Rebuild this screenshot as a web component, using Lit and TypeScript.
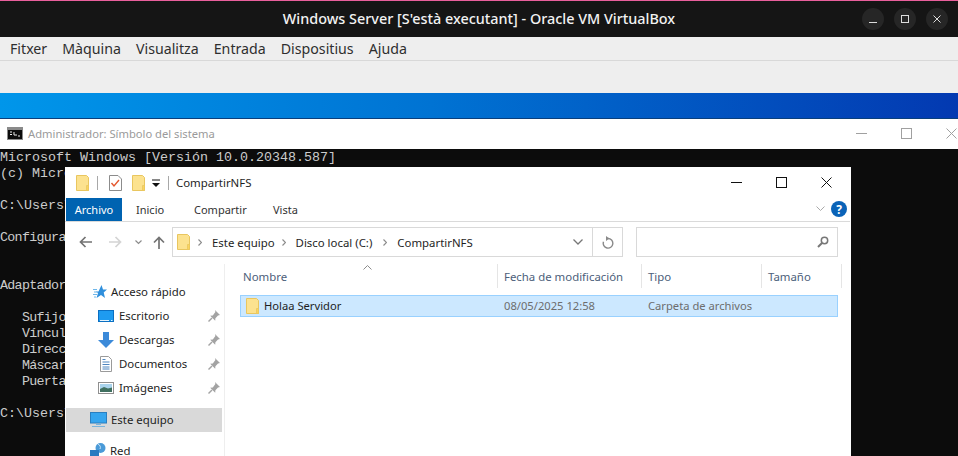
import { LitElement, html, css } from "lit";
import { customElement } from "lit/decorators.js";

const folder = () => html`<svg width="13" height="16" viewBox="0 0 13 16"><path d="M.5.5h10l2 2v13H.5z" fill="#fce28f" stroke="#e9c65f"/><path d="M10.5 10.5h2v5h-2z" fill="#fbd45e" stroke="#e9c65f" stroke-width=".8"/></svg>`;
const chev = html`<svg width="4" height="7" viewBox="0 0 4 7"><path d="M.5.5l3 3-3 3" fill="none" stroke="#8c8c8c" stroke-width="1.2"/></svg>`;
const pin = html`<svg width="14" height="14" viewBox="0 0 14 14"><path d="M8 1l5 5-2 .6-2.6 2.6-.2 2.6-5-5 2.6-.3L8.4 3z" fill="#a3a3a3"/><path d="M5 9l-3.5 3.5" stroke="#a3a3a3" stroke-width="1.5"/></svg>`;

const menu = ["Fitxer", "Màquina", "Visualitza", "Entrada", "Dispositius", "Ajuda"];
const consoleLines: [string, boolean][] = [
  ["Microsoft Windows [Versión 10.0.20348.587]", false],
  ["(c) Micro", false],
  ["", false],
  ["C:\\Users\\", false],
  ["", false],
  ["Configura", true],
  ["", false],
  ["", false],
  ["Adaptador", true],
  ["", false],
  ["   Sufijo", true],
  ["   Víncul", true],
  ["   Direcc", true],
  ["   Máscar", true],
  ["   Puerta", true],
  ["", false],
  ["C:\\Users\\", false],
];
const navIcons: Record<string, unknown> = {
  desk: html`<svg width="16" height="12" viewBox="0 0 16 12"><rect x=".5" y=".5" width="15" height="11" fill="#1e9bf0" stroke="#0b6fc2"/><path d="M2 10.5h9M13 10.5h1.5" stroke="#e6f4fd"/></svg>`,
  down: html`<svg width="16" height="16" viewBox="0 0 16 16"><path d="M5 0h6v8h5l-8 8-8-8h5z" fill="#3c8ad9"/></svg>`,
  doc: html`<svg width="12" height="16" viewBox="0 0 12 16"><path d="M.5.5h8l3 3v12H.5z" fill="#fff" stroke="#9a9a9a"/><path d="M2.5 3.5h3M2.5 6h7M2.5 8.5h7M2.5 11h7M2.5 13h7" stroke="#4f86bf"/></svg>`,
  img: html`<svg width="16" height="12" viewBox="0 0 16 12"><rect x=".5" y=".5" width="15" height="11" fill="#fff" stroke="#8f8f8f"/><rect x="2" y="2" width="12" height="8" fill="#a9d3ec"/><path d="M2 7l4-2 4 1.5 4-1V10H2z" fill="#3f6f5f"/></svg>`,
};

@customElement("app-root")
export class AppRoot extends LitElement {
  static styles = css`
    :host { display: block; width: 958px; height: 456px; overflow: hidden; position: relative; background: #0c0c0c; }
    * { box-sizing: border-box; }
    .page { display: flex; flex-direction: column; height: 456px; }
    .titlebar { height: 37px; flex: none; background: #151515; border-top: 1px solid #e95f9c; color: #f2f2f2; display: flex; align-items: center; justify-content: center; position: relative; font: 500 14.4px "Noto Sans", sans-serif; padding-bottom: 1px; }
    .wm { position: absolute; right: 10px; top: 7px; display: flex; gap: 10px; }
    .wm span { width: 22px; height: 22px; border-radius: 50%; background: #262626; display: flex; align-items: center; justify-content: center; }
    .menubar { height: 24px; flex: none; background: #eeeeee; border-bottom: 1px solid #d8d8d8; display: flex; gap: 15px; padding: 0 0 1px 10px; align-items: center; font: 14.2px "Noto Sans", sans-serif; color: #2e2e2e; }
    .toolbar { height: 32px; flex: none; background: #eeeeee; }
    .desktop { height: 26px; flex: none; background: linear-gradient(90deg, #0096ea 0%, #0073d3 45%, #0339b1 100%); border-bottom: 1px solid #0a3f7c; }
    .cmd-title { height: 30px; flex: none; background: #fff; display: flex; align-items: center; padding: 0 0 2px 7px; gap: 5px; font: 11.2px "Noto Sans", sans-serif; color: #9a9a9a; overflow: hidden; }
    .cmd-btns { margin-left: auto; margin-right: -16px; display: flex; align-items: center; flex: none; }
    .cmd-btns span { width: 45px; display: flex; justify-content: center; }
    .cmd-body { flex: 1; background: #0c0c0c; color: #cccccc; font: 13.33px/16px "Liberation Mono", monospace; white-space: pre; padding-top: 1px; overflow: hidden; }
    .cmd-body div { height: 16px; }
    .cmd-body .narrow { letter-spacing: -0.7px; }
    .explorer { position: absolute; left: 65px; top: 167px; width: 786px; height: 289px; background: #fff; display: flex; flex-direction: column; font: 11.4px "Noto Sans", sans-serif; color: #1e1e1e; overflow: hidden; }
    .ex-title { height: 31px; flex: none; display: flex; align-items: center; padding: 0 0 0 11px; }
    .ex-title .sep { width: 1px; height: 14px; background: #a8a8a8; margin: 0 11px 0 8px; }
    .ex-title .sep.last { margin: 0 0 0 8px; }
    .ex-title .gap { width: 10px; }
    .ex-title .drop { margin-left: 7px; }
    .ex-title .name { margin-left: 7px; }
    .ex-btns { margin-left: auto; margin-right: 2px; display: flex; align-items: center; }
    .ex-btns span { width: 45px; display: flex; justify-content: center; }
    .tabs { height: 24px; flex: none; margin-right: 1px; border-bottom: 1px solid #dadada; display: flex; align-items: stretch; padding-left: 1px; }
    .tab { display: flex; align-items: center; font-size: 11px; color: #333; }
    .tab.on { background: #0063b1; color: #fff; width: 56px; justify-content: center; }
    .tab.in { padding-left: 14px; width: 58px; }
    .tab.co { width: 79px; padding-left: 14px; }
    .tab.vi { padding-left: 14px; }
    .ribbon-end { margin-left: auto; display: flex; align-items: center; gap: 6px; padding: 0 3px 1px 0; }
    .help { width: 16px; height: 16px; border-radius: 50%; background: #0a63b8; color: #fff; display: flex; align-items: center; justify-content: center; font: 700 12px "Noto Sans", sans-serif; }
    .nav { height: 42px; flex: none; display: flex; align-items: flex-start; padding: 5px 13px 0 14px; }
    .nav-arrows { display: flex; align-items: center; width: 93px; height: 30px; }
    .nav-arrows .fw { margin-left: 17px; }
    .nav-arrows .dn { margin-left: 13px; }
    .nav-arrows .up { margin-left: 11px; }
    .addr { width: 451px; height: 30px; border: 1px solid #d9d9d9; display: flex; align-items: center; padding-left: 4px; }
    .crumb { display: flex; align-items: center; gap: 10px; margin-left: 8px; }
    .crumb.c2 { margin-left: 7px; }
    .crumb.c3 { margin-left: 11px; }
    .addr .chev { margin-left: auto; width: 29px; display: flex; justify-content: center; }
    .addr .ref { width: 30px; height: 28px; border-left: 1px solid #d9d9d9; display: flex; align-items: center; justify-content: center; }
    .search { width: 202px; height: 30px; margin-left: 13px; border: 1px solid #d9d9d9; display: flex; align-items: center; justify-content: flex-end; padding-right: 8px; }
    .main { flex: 1; display: flex; min-height: 0; }
    .tree { width: 160px; flex: none; border-right: 1px solid #eeeeee; padding-top: 16px; margin-right: 15px; }
    .t { height: 24px; display: flex; align-items: center; padding-bottom: 1px; }
    .t.top { padding-left: 28px; gap: 4px; }
    .t.sub { padding-left: 33px; width: 157px; }
    .t.sub .i { width: 16px; display: flex; justify-content: center; margin-right: 5px; }
    .t.sub .p { margin-left: auto; margin-right: 1px; display: flex; }
    .t.cur { background: #d9d9d9; margin-left: 1px; width: 156px; padding-left: 24px; gap: 4px; margin-top: 8px; }
    .t.red { margin-top: 7px; padding-left: 25px; gap: 4px; }
    .list { flex: 1; padding-right: 13px; }
    .head { height: 24px; display: grid; grid-template-columns: 258px 144px 120px 80px; color: #4c607a; position: relative; margin-right: -4px; }
    .head div { border-right: 1px solid #e5e5e5; padding-left: 6px; display: flex; align-items: center; }
    .head div:first-child { padding-left: 3px; }
    .sort { position: absolute; left: 123px; top: 1px; }
    .row { height: 22px; margin-top: 7px; padding-bottom: 1px; background: #cce8ff; border: 1px solid #99d1ff; display: grid; grid-template-columns: 257px 144px 1fr; align-items: center; color: #6d6d6d; font-size: 11.2px; }
    .row .n { display: flex; align-items: center; gap: 5px; color: #1e1e1e; padding-left: 5px; font-size: 11.2px; }
    .row .c { padding-left: 6px; }
  `;

  render() {
    return html`
      <div class="page">
        <div class="titlebar">Windows Server [S'està executant] - Oracle VM VirtualBox
          <div class="wm">
            <span><svg width="10" height="10" viewBox="0 0 10 10"><path d="M1 8.5h8" stroke="#dcdcdc"/></svg></span>
            <span><svg width="10" height="10" viewBox="0 0 10 10"><rect x="1.5" y="1.5" width="7" height="7" fill="none" stroke="#dcdcdc"/></svg></span>
            <span><svg width="10" height="10" viewBox="0 0 10 10"><path d="M1.5 1.5l7 7M8.5 1.5l-7 7" stroke="#dcdcdc"/></svg></span>
          </div>
        </div>
        <div class="menubar">${menu.map((m) => html`<span>${m}</span>`)}</div>
        <div class="toolbar"></div>
        <div class="desktop"></div>
        <div class="cmd-title">
          <svg width="16" height="13" viewBox="0 0 16 13"><rect width="16" height="13" fill="#8a8a8a"/><rect x="1" y="3" width="14" height="9" fill="#0c0c0c"/><path d="M3 5h2M3 7.5h2M7 5v3h3M11 9h2" stroke="#eee"/></svg>
          <span>Administrador: Símbolo del sistema</span>
          <div class="cmd-btns">
            <span><svg width="11" height="11" viewBox="0 0 11 11"><path d="M0 5.5h11" stroke="#a0a0a0"/></svg></span>
            <span><svg width="11" height="11" viewBox="0 0 11 11"><rect x=".5" y=".5" width="10" height="10" fill="none" stroke="#a0a0a0"/></svg></span>
            <span><svg width="11" height="11" viewBox="0 0 11 11"><path d="M.5.5l10 10M10.5.5l-10 10" stroke="#a0a0a0"/></svg></span>
          </div>
        </div>
        <div class="cmd-body">${consoleLines.map(([l, n]) => html`<div class=${n ? "narrow" : ""}>${l}</div>`)}</div>
      </div>
      <div class="explorer">
        <div class="ex-title">
          ${folder()}
          <div class="sep"></div>
          <svg width="13" height="16" viewBox="0 0 13 16"><path d="M.5.5h8.5l3.5 3.5v11.500H.5z" fill="#fff" stroke="#8c8c8c"/><path d="M2.5 8l2.500 3 5-6" fill="none" stroke="#e4572e" stroke-width="1.400"/></svg>
          <div class="gap"></div>
          ${folder()}
          <svg class="drop" width="8" height="8" viewBox="0 0 8 8"><path d="M0 1h8" stroke="#111"/><path d="M0 4h8L4 8z" fill="#111"/></svg>
          <div class="sep last"></div>
          <span class="name">CompartirNFS</span>
          <div class="ex-btns">
            <span><svg width="11" height="11" viewBox="0 0 11 11"><path d="M0 5.5h11" stroke="#111"/></svg></span>
            <span><svg width="11" height="11" viewBox="0 0 11 11"><rect x=".5" y=".5" width="10" height="10" fill="none" stroke="#111"/></svg></span>
            <span><svg width="11" height="11" viewBox="0 0 11 11"><path d="M.5.5l10 10M10.5.5l-10 10" stroke="#111"/></svg></span>
          </div>
        </div>
        <div class="tabs">
          <div class="tab on">Archivo</div>
          <div class="tab in">Inicio</div>
          <div class="tab co">Compartir</div>
          <div class="tab vi">Vista</div>
          <div class="ribbon-end">
            <svg width="9" height="6" viewBox="0 0 9 6"><path d="M.5.5l4 4 4-4" fill="none" stroke="#a9a9a9"/></svg>
            <div class="help">?</div>
          </div>
        </div>
        <div class="nav">
          <div class="nav-arrows">
            <svg width="13" height="12" viewBox="0 0 13 12"><path d="M13 6H1.5M6.5 1l-5 5 5 5" fill="none" stroke="#737373" stroke-width="1.7"/></svg>
            <svg class="fw" width="13" height="12" viewBox="0 0 13 12"><path d="M0 6h11.5M6.5 1l5 5-5 5" fill="none" stroke="#d4d4d4" stroke-width="1.7"/></svg>
            <svg class="dn" width="7" height="5" viewBox="0 0 7 5"><path d="M.5.5l3 3 3-3" fill="none" stroke="#8c8c8c" stroke-width="1.2"/></svg>
            <svg class="up" width="12" height="13" viewBox="0 0 12 13"><path d="M6 13V1.5M1 6.5l5-5 5 5" fill="none" stroke="#737373" stroke-width="1.7"/></svg>
          </div>
          <div class="addr">
            ${folder()}
            <div class="crumb">${chev}<span>Este equipo</span></div>
            <div class="crumb c2">${chev}<span>Disco local (C:)</span></div>
            <div class="crumb c3">${chev}<span>CompartirNFS</span></div>
            <div class="chev"><svg width="10" height="6" viewBox="0 0 10 6"><path d="M.5.5l4.5 4.5 4.5-4.5" fill="none" stroke="#777" stroke-width="1.3"/></svg></div>
            <div class="ref"><svg width="12" height="13" viewBox="0 0 12 13"><path d="M6 2.5a4.8 4.8 0 1 1-4.500 3.200" fill="none" stroke="#8a8a8a" stroke-width="1.4"/><path d="M4 0l3.500 2.500L4 5z" fill="#8a8a8a"/></svg></div>
          </div>
          <div class="search"><svg width="12" height="12" viewBox="0 0 12 12"><circle cx="7.5" cy="4.5" r="3.2" fill="none" stroke="#777" stroke-width="1.5"/><path d="M5 7l-4 4" stroke="#777" stroke-width="2"/></svg></div>
        </div>
        <div class="main">
          <div class="tree">
            <div class="t top"><svg width="14" height="14" viewBox="0 0 14 14"><path d="M8.5 0l1.500 4.500h4L10.700 7.500l1.300 5.500-4-3-4.500 3 1.500-5L3 6.500h2.500z" fill="#2f8fdc"/><path d="M0 4.500h4M1 7h3M0 9.500h4M1 12h2" stroke="#6db6ea"/></svg><span>Acceso rápido</span></div>
            ${[["desk", "Escritorio"], ["down", "Descargas"], ["doc", "Documentos"], ["img", "Imágenes"]].map(([i, n]) => html`<div class="t sub"><span class="i">${navIcons[i]}</span><span>${n}</span><span class="p">${pin}</span></div>`)}
            <div class="t cur"><svg width="17" height="15" viewBox="0 0 17 15"><rect x=".5" y=".5" width="16" height="10.500" fill="#35a5ee" stroke="#2a7fc0"/><path d="M6 12.500h5M2 14.500h13" stroke="#7ab4dc"/></svg><span>Este equipo</span></div>
            <div class="t red"><svg width="16" height="15" viewBox="0 0 16 15"><circle cx="10.500" cy="5" r="5" fill="#4a9ad8"/><path d="M8 1c2 1 3 3 2 5" fill="none" stroke="#cfe6f6"/><rect x="0" y="7" width="9" height="7" fill="#2a7ac0"/></svg><span>Red</span></div>
          </div>
          <div class="list">
            <div class="head">
              <div>Nombre</div><div>Fecha de modificación</div><div>Tipo</div><div>Tamaño</div>
              <svg class="sort" width="9" height="5" viewBox="0 0 9 5"><path d="M.5 4.500l4-4 4 4" fill="none" stroke="#8c8c8c"/></svg>
            </div>
            <div class="row">
              <div class="n">${folder()}<span>Holaa Servidor</span></div>
              <div class="c">08/05/2025 12:58</div>
              <div class="c">Carpeta de archivos</div>
            </div>
          </div>
        </div>
      </div>
    `;
  }
}
